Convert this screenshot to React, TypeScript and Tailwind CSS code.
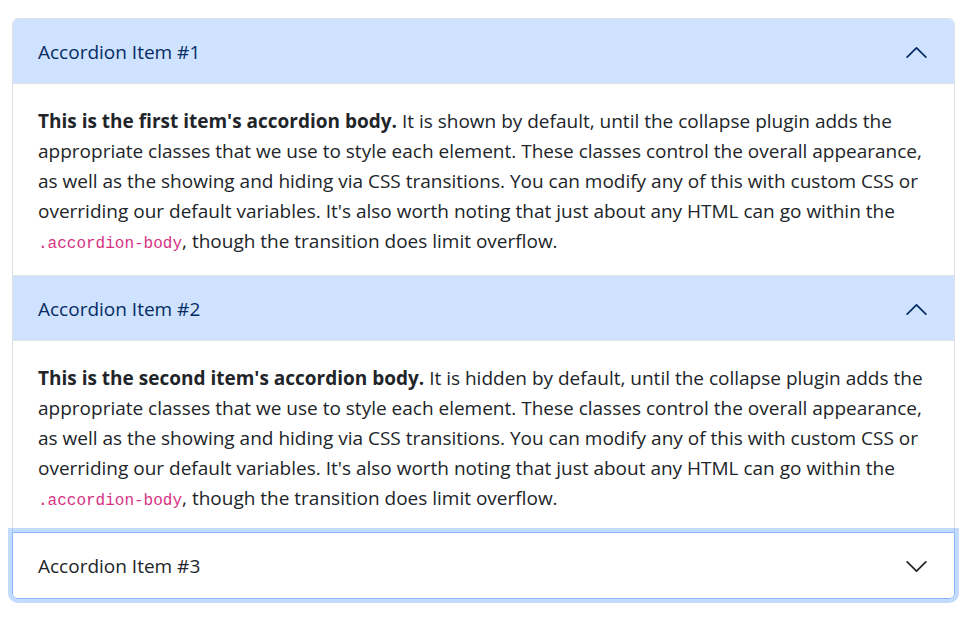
import React from 'react';

const bodyFont = { fontFamily: '"Open Sans", "Noto Sans", sans-serif' };

const Chevron: React.FC<{ open: boolean }> = ({ open }) => (
  <svg
    viewBox="0 0 16 16"
    width={25}
    height={25}
    fill="none"
    stroke="currentColor"
    strokeWidth={1.1}
    strokeLinecap="round"
    strokeLinejoin="round"
    className={open ? 'rotate-180 shrink-0' : 'shrink-0'}
  >
    <path d="M2 5L8 11L14 5" />
  </svg>
);

interface ItemProps {
  title: string;
  open: boolean;
  focused?: boolean;
  first?: boolean;
  last?: boolean;
  lead?: string;
  rest?: string;
}

const Item: React.FC<ItemProps> = ({ title, open, focused, first, last, lead, rest }) => {
  const shell = [
    'relative border',
    focused ? 'z-10 -mt-px border-[#86b7fe] shadow-[0_0_0_4px_rgba(13,110,253,0.25)]' : 'border-[#dee2e6]',
    !first && !focused ? 'border-t-0' : '',
    first ? 'rounded-t-[6px]' : '',
    last ? 'rounded-b-[6px]' : '',
  ].join(' ');

  return (
    <div className={shell}>
      <button
        className={`flex w-full items-center justify-between px-[25px] pt-[18px] pb-[17px] text-left text-[19px] leading-[30px] ${
          open
            ? 'bg-[#cfe2ff] text-[#052c65] shadow-[inset_0_-1px_0_#dee2e6]'
            : 'bg-white text-[#212529]'
        } ${first ? 'rounded-t-[5px]' : ''} ${last ? 'rounded-b-[5px]' : ''}`}
        style={bodyFont}
      >
        <span>{title}</span>
        <Chevron open={open} />
      </button>
      {open && (
        <div className="px-[25px] pt-[22px] pb-[19px] text-[19px] leading-[30px] text-[#212529]" style={bodyFont}>
          <strong className="font-bold">{lead}</strong> {rest}{' '}
          <code
            className="align-baseline text-[16px] leading-[0] text-[#d63384]"
            style={{ fontFamily: '"Liberation Mono", monospace' }}
          >
            .accordion-body
          </code>
          , though the transition does limit overflow.
        </div>
      )}
    </div>
  );
};

const common =
  'until the collapse plugin adds the appropriate classes that we use to style each element. These classes control the overall appearance, as well as the showing and hiding via CSS transitions. You can modify any of this with custom CSS or overriding our default variables. It\'s also worth noting that just about any HTML can go within the';

export default function App() {
  return (
    <div className="min-h-screen bg-white pl-[12px] pt-[18px]">
      <div className="w-[943px]">
        <Item
          first
          open
          title="Accordion Item #1"
          lead="This is the first item's accordion body."
          rest={`It is shown by default, ${common}`}
        />
        <Item
          open
          title="Accordion Item #2"
          lead="This is the second item's accordion body."
          rest={`It is hidden by default, ${common}`}
        />
        <Item last focused open={false} title="Accordion Item #3" />
      </div>
    </div>
  );
}
